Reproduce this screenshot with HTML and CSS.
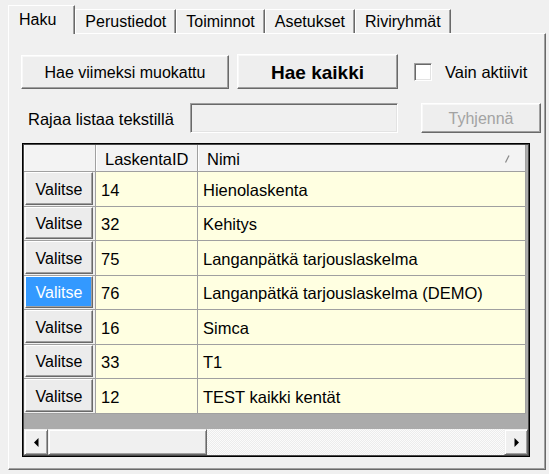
FILE: index.html
```html
<!DOCTYPE html>
<html lang="fi">
<head>
<meta charset="utf-8">
<title>Haku</title>
<link rel="stylesheet" href="styles.css">
</head>
<body>
<div class="tabctl">
  <div class="tabstrip">
    <div class="tab active">Haku</div>
    <div class="tab">Perustiedot</div>
    <div class="tab">Toiminnot</div>
    <div class="tab">Asetukset</div>
    <div class="tab">Riviryhmät</div>
  </div>
  <div class="panel">
    <div class="row1">
      <button class="btn btn-recent">Hae viimeksi muokattu</button>
      <button class="btn btn-all">Hae kaikki</button>
      <span class="chk-box"></span>
      <span class="chk-label">Vain aktiivit</span>
    </div>
    <div class="row2">
      <span class="filter-label">Rajaa listaa tekstillä</span>
      <div class="textbox"></div>
      <button class="btn btn-clear" disabled>Tyhjennä</button>
    </div>
    <div class="grid">
      <div class="table">
        <div class="hcell"></div>
        <div class="hcell">LaskentaID</div>
        <div class="hcell hcell-sort"><span>Nimi</span><svg class="sort" width="6" height="8" viewBox="0 0 6 8"><path d="M5 0.5 L1.5 7.5" stroke="#8a8a8a" stroke-width="1.3" fill="none"/></svg></div>

        <div class="bcell"><span class="vbtn">Valitse</span></div>
        <div class="dcell">14</div>
        <div class="dcell">Hienolaskenta</div>

        <div class="bcell"><span class="vbtn">Valitse</span></div>
        <div class="dcell">32</div>
        <div class="dcell">Kehitys</div>

        <div class="bcell"><span class="vbtn">Valitse</span></div>
        <div class="dcell">75</div>
        <div class="dcell">Langanpätkä tarjouslaskelma</div>

        <div class="bcell"><span class="vbtn selected">Valitse</span></div>
        <div class="dcell">76</div>
        <div class="dcell">Langanpätkä tarjouslaskelma (DEMO)</div>

        <div class="bcell"><span class="vbtn">Valitse</span></div>
        <div class="dcell">16</div>
        <div class="dcell">Simca</div>

        <div class="bcell"><span class="vbtn">Valitse</span></div>
        <div class="dcell">33</div>
        <div class="dcell">T1</div>

        <div class="bcell"><span class="vbtn">Valitse</span></div>
        <div class="dcell">12</div>
        <div class="dcell">TEST kaikki kentät</div>
      </div>
      <div class="spacer"></div>
      <div class="hscroll">
        <div class="sbtn"><svg width="5" height="9" viewBox="0 0 5 9"><path d="M4.5 0 L0 4.5 L4.5 9 Z" fill="#000"/></svg></div>
        <div class="thumb"></div>
        <div class="track"></div>
        <div class="sbtn"><svg width="5" height="9" viewBox="0 0 5 9"><path d="M0.5 0 L5 4.5 L0.5 9 Z" fill="#000"/></svg></div>
      </div>
    </div>
  </div>
</div>
</body>
</html>
```

FILE: styles.css
```css
* { box-sizing: border-box; }
html, body { margin: 0; padding: 0; }
body {
  width: 549px;
  height: 474px;
  overflow: hidden;
  background: #f0f0f0;
  font-family: "Liberation Sans", Arial, sans-serif;
  font-size: 16px;
  color: #000;
}
.tabctl {
  margin: 5px 0 0 8px;
  width: 538px;
}
.tabstrip {
  display: flex;
  align-items: flex-end;
  height: 28px;
}
.tab {
  height: 24px;
  padding: 1px 9px 0;
  display: flex;
  align-items: center;
  background: #f0f0f0;
  border-top: 1px solid #fff;
  border-left: 1px solid #fff;
  border-right: 1px solid #696969;
  box-shadow: inset -1px 0 0 #a0a0a0;
  white-space: nowrap;
}
.tab.active {
  height: 29px;
  padding: 0 18px 0 10px;
  margin-bottom: -1px;
  position: relative;
  z-index: 1;
}
.panel {
  height: 437px;
  border: 1px solid;
  border-color: #fff #696969 #696969 #fff;
  box-shadow: inset -1px -1px 0 #a0a0a0;
  padding: 20px 0 0 12px;
  display: flex;
  flex-direction: column;
}
.btn {
  font-family: "Liberation Sans", Arial, sans-serif;
  font-size: 16px;
  color: #000;
  background: #eeeeee;
  border: 1px solid;
  border-color: #fff #696969 #696969 #fff;
  box-shadow: inset -1px -1px 0 #a0a0a0, inset 1px 1px 0 #f8f8f8;
  padding: 3px 0 0;
  margin: 0;
  border-radius: 0;
}
.row1 {
  display: flex;
  align-items: center;
  height: 35px;
}
.btn-recent { width: 208px; height: 34px; }
.btn-all {
  width: 161px;
  height: 35px;
  margin-left: 8px;
  font-weight: bold;
  font-size: 19px;
  padding-top: 2px;
}
.chk-box {
  width: 18px;
  height: 18px;
  margin-left: 16px;
  background: #fff;
  border: 1px solid;
  border-color: #a0a0a0 #fff #fff #a0a0a0;
  box-shadow: inset 1px 1px 0 #696969, inset -1px -1px 0 #e3e3e3;
}
.chk-label {
  margin-left: 13px;
  padding-top: 2px;
  font-size: 16.5px;
}
.row2 {
  display: flex;
  align-items: center;
  height: 31px;
  margin-top: 13px;
}
.filter-label {
  width: 162px;
  margin-left: 7px;
  padding-top: 3px;
  font-size: 16.5px;
}
.textbox {
  width: 208px;
  height: 30px;
  margin-top: 1px;
  background: #f0f0f0;
  border: 1px solid;
  border-color: #a0a0a0 #fff #fff #a0a0a0;
  box-shadow: inset 1px 1px 0 #696969, inset -1px -1px 0 #e3e3e3;
}
.btn-clear {
  width: 120px;
  height: 30px;
  margin-left: 23px;
  color: #a3a3a3;
}
.grid {
  width: 508px;
  height: 314px;
  margin: 10px 0 0 1px;
  border: 1px solid #000;
  padding: 1px;
  box-shadow: inset 0 0 0 1px #4a4a4a;
  background: #ababab;
  display: flex;
  flex-direction: column;
}
.table {
  display: grid;
  grid-template-columns: 72px 102px 328px;
  grid-template-rows: 27px repeat(7, 34.5px);
}
.hcell {
  background: #f3f3f3;
  border-right: 1px solid #a0a0a0;
  border-bottom: 1px solid #a0a0a0;
  box-shadow: inset 1px 0 0 #fff;
  padding: 3px 0 0 9px;
  display: flex;
  align-items: center;
  font-size: 16.5px;
}
.hcell-sort {
  justify-content: space-between;
  padding-right: 15px;
}
.sort { margin-bottom: 2px; }
.bcell {
  background: #f0f0f0;
  border-right: 1px solid #a0a0a0;
  border-bottom: 1px solid #a0a0a0;
  padding: 0 2px 1px 1px;
  display: flex;
}
.vbtn {
  flex: 1;
  display: flex;
  align-items: center;
  justify-content: center;
  padding-top: 3px;
  background: #ececec;
  border: 1px solid;
  border-color: #fff #696969 #696969 #fff;
  box-shadow: inset -1px -1px 0 #a0a0a0;
}
.vbtn.selected {
  background: #3399ff;
  color: #fff;
}
.dcell {
  background: #ffffe1;
  border-right: 1px solid #a0a0a0;
  border-bottom: 1px solid #a0a0a0;
  padding: 3px 0 0 5px;
  display: flex;
  align-items: center;
  white-space: nowrap;
  font-size: 16.5px;
}
.spacer { flex: 1; }
.hscroll {
  height: 26px;
  display: flex;
  background: #f6f6f6;
}
.sbtn, .thumb {
  background: #f0f0f0;
  border: 1px solid;
  border-color: #f0f0f0 #696969 #696969 #f0f0f0;
  box-shadow: inset 1px 1px 0 #fff, inset -1px -1px 0 #a0a0a0;
}
.sbtn {
  width: 24px;
  display: flex;
  align-items: center;
  justify-content: center;
}
.thumb { width: 159px; }
.track {
  flex: 1;
  background-color: #fbfbfb;
  background-image: repeating-conic-gradient(#ececec 0 25%, #fbfbfb 0 50%);
  background-size: 2px 2px;
}
```
